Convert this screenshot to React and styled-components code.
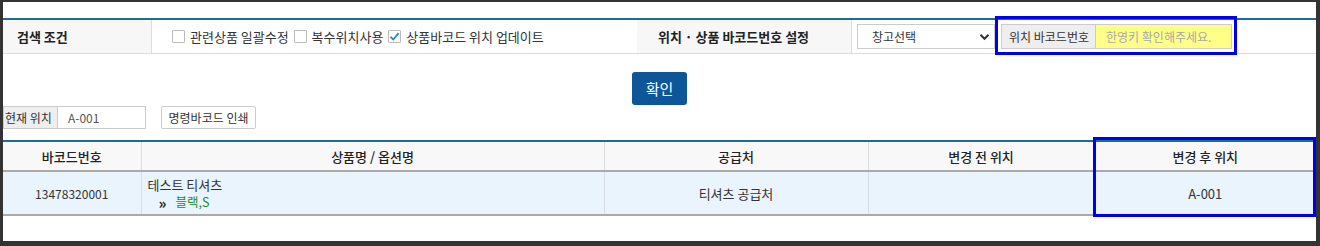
import React from 'react';
import styled, { createGlobalStyle } from 'styled-components';

const Global = createGlobalStyle`
  html, body { margin: 0; padding: 0; background: #333; }
  body {
    font-family: "Noto Sans CJK KR", "Noto Sans", sans-serif;
    font-size: 12px;
    color: #333;
  }
  * { box-sizing: border-box; }
`;

const Panel = styled.div`
  margin: 2px 4px 0 3px;
  height: 239px;
  background: #fff;
  padding-top: 16px;
  overflow: hidden;
`;

const SearchBar = styled.div`
  display: grid;
  grid-template-columns: 149px 485px 215px 1fr;
  height: 36px;
  border-top: 2px solid #1f6c8d;
  border-bottom: 1px solid #ddd;
`;

const LabelCell = styled.div`
  display: flex;
  align-items: center;
  padding-left: ${p => p.$pad}px;
  background: #f7f7f7;
  border-right: ${p => (p.$divider ? '1px solid #ddd' : 'none')};
  font-size: 13px;
  font-weight: 700;
  color: #222;
`;

const OptionCell = styled.div`
  display: flex;
  align-items: center;
  gap: 5px;
  padding-left: 20px;
`;

const CheckItem = styled.label`
  display: flex;
  align-items: center;
  gap: 5px;
  font-size: 13px;
  color: #333;
`;

const Box = styled.span`
  width: 13px;
  height: 13px;
  border: 1px solid #bbb;
  border-radius: 1px;
  background: #fff;
  display: flex;
  align-items: center;
  justify-content: center;
`;

const ControlCell = styled.div`
  display: flex;
  align-items: center;
  padding-left: 5px;
`;

const Select = styled.div`
  width: 138px;
  height: 25px;
  border: 1px solid #ccc;
  background: #fff;
  display: flex;
  align-items: center;
  justify-content: space-between;
  padding: 0 4px 0 14px;
  font-size: 12px;
  color: #333;
`;

const Group = styled.div`
  position: relative;
  display: flex;
  height: 25px;
  margin-left: 6px;
`;

const Highlight = styled.div`
  position: absolute;
  pointer-events: none;
  border: 3px solid #0000f0;
  top: ${p => p.$top}px;
  left: ${p => p.$left}px;
  right: ${p => p.$right}px;
  bottom: ${p => p.$bottom}px;
`;

const Addon = styled.span`
  display: flex;
  align-items: center;
  width: ${p => p.$w}px;
  padding-left: ${p => p.$pl}px;
  background: #eee;
  border: 1px solid #ccc;
  border-right: none;
  font-size: 12px;
  color: #333;
  white-space: nowrap;
`;

const Field = styled.span`
  display: flex;
  align-items: center;
  width: ${p => p.$w}px;
  padding-left: ${p => p.$pl}px;
  background: ${p => p.$bg || '#fff'};
  border: 1px solid #ccc;
  font-size: 12px;
  color: ${p => p.$color || '#555'};
  white-space: nowrap;
`;

const ConfirmButton = styled.button`
  display: block;
  margin: 18px auto 0;
  width: 55px;
  height: 33px;
  padding: 0;
  border: none;
  border-radius: 3px;
  background: #0d5697;
  color: #fff;
  font-family: inherit;
  font-size: 15px;
`;

const LocationRow = styled.div`
  display: flex;
  height: 23px;
  margin-top: 1px;
`;

const PlainButton = styled.button`
  margin-left: 15px;
  width: 95px;
  height: 23px;
  padding: 0;
  border: 1px solid #ccc;
  border-radius: 2px;
  background: #fff;
  font-family: inherit;
  font-size: 12px;
  color: #333;
`;

const TableWrap = styled.div`
  position: relative;
  margin-top: 11px;
`;

const Table = styled.table`
  width: 100%;
  border-collapse: collapse;
  table-layout: fixed;
  border-top: 2px solid #1f6c8d;
`;

const Th = styled.th`
  height: 30px;
  background: #f8f8f8;
  border-bottom: 2px solid #aaa;
  border-right: 1px solid #ddd;
  font-size: 13px;
  font-weight: 500;
  color: #222;
  padding: 0;
  &:last-child { border-right: none; }
`;

const Td = styled.td`
  height: 44px;
  background: #eaf4fd;
  border-bottom: 2px solid #aaa;
  border-right: 1px solid #d7dde3;
  font-size: ${p => p.$size || 13}px;
  color: #333;
  text-align: ${p => p.$align || 'center'};
  padding: ${p => (p.$align === 'left' ? '0 6px' : '0')};
  &:last-child { border-right: none; }
`;

const ProductName = styled.div`
  line-height: 16px;
  height: 16px;
`;

const OptionLine = styled.div`
  display: flex;
  align-items: center;
  gap: 9px;
  padding-left: 11px;
  height: 17px;
  padding-top: 2px;
`;

const Chevrons = styled.span`
  font-weight: 700;
  font-size: 15px;
  line-height: 1;
  color: #222;
`;

const OptionName = styled.span`
  color: #1e8a1e;
  font-size: 12.5px;
  line-height: 1;
`;

const CheckMark = () => (
  <svg width="11" height="11" viewBox="0 0 11 11">
    <path d="M1.5 5.8 L4.3 8.5 L9.6 2.2" fill="none" stroke="#2f7fd6" strokeWidth="1.8" />
  </svg>
);

const Chevron = () => (
  <svg width="11" height="8" viewBox="0 0 11 8">
    <path d="M1.5 1.8 L5.5 5.8 L9.5 1.8" fill="none" stroke="#333" strokeWidth="2" />
  </svg>
);

const options = [
  { label: '관련상품 일괄수정', checked: false },
  { label: '복수위치사용', checked: false },
  { label: '상품바코드 위치 업데이트', checked: true },
];

const columns = [
  { title: '바코드번호', width: 138 },
  { title: '상품명 / 옵션명', width: 463 },
  { title: '공급처', width: 264 },
  { title: '변경 전 위치', width: 226 },
  { title: '변경 후 위치', width: 222 },
];

export default function App() {
  return (
    <>
      <Global />
      <Panel>
        <SearchBar>
          <LabelCell $pad={14} $divider>검색 조건</LabelCell>
          <OptionCell>
            {options.map(o => (
              <CheckItem key={o.label}>
                <Box>{o.checked && <CheckMark />}</Box>
                {o.label}
              </CheckItem>
            ))}
          </OptionCell>
          <LabelCell $pad={21} $divider>위치 · 상품 바코드번호 설정</LabelCell>
          <ControlCell>
            <Select>
              창고선택
              <Chevron />
            </Select>
            <Group>
              <Addon $w={94} $pl={7}>위치 바코드번호</Addon>
              <Field $w={137} $pl={10} $bg="#ffff88" $color="#a8a8a8">한영키 확인해주세요.</Field>
              <Highlight $top={-8} $left={-6} $right={-5} $bottom={-6} />
            </Group>
          </ControlCell>
        </SearchBar>

        <ConfirmButton>확인</ConfirmButton>

        <LocationRow>
          <Addon $w={54} $pl={1}>현재 위치</Addon>
          <Field $w={89} $pl={10}>A-001</Field>
          <PlainButton>명령바코드 인쇄</PlainButton>
        </LocationRow>

        <TableWrap>
          <Table>
            <colgroup>
              {columns.map(c => (
                <col key={c.title} style={{ width: c.width }} />
              ))}
            </colgroup>
            <thead>
              <tr>
                {columns.map(c => (
                  <Th key={c.title}>{c.title}</Th>
                ))}
              </tr>
            </thead>
            <tbody>
              <tr>
                <Td $size={12}>13478320001</Td>
                <Td $align="left">
                  <ProductName>테스트 티셔츠</ProductName>
                  <OptionLine>
                    <Chevrons>»</Chevrons>
                    <OptionName>블랙,S</OptionName>
                  </OptionLine>
                </Td>
                <Td>티셔츠 공급처</Td>
                <Td></Td>
                <Td>A-001</Td>
              </tr>
            </tbody>
          </Table>
          <Highlight $top={-3} $left={1090} $right={0} $bottom={-1} />
        </TableWrap>
      </Panel>
    </>
  );
}
